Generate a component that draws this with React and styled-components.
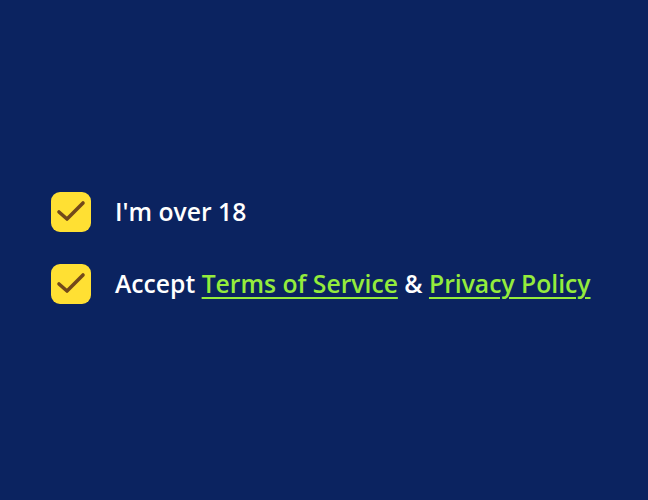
import React from "react";
import styled, { createGlobalStyle } from "styled-components";

const Global = createGlobalStyle`
  html, body { margin: 0; padding: 0; background: #0b2360; }
  body { font-family: "Open Sans", "Noto Sans", sans-serif; }
`;

const Page = styled.div`
  width: 648px;
  height: 500px;
  box-sizing: border-box;
  padding: 192px 0 0 51px;
  display: flex;
  align-items: flex-start;
  background: #0b2360;
`;

const List = styled.div`
  display: flex;
  flex-direction: column;
  gap: 32px;
`;

const Row = styled.label`
  display: flex;
  align-items: center;
  gap: 24px;
  color: #ffffff;
  font-size: 24.7px;
  font-weight: 600;
  line-height: 40px;
`;

const Box = styled.span`
  width: 40px;
  height: 40px;
  border-radius: 9px;
  background: #ffe033;
  display: flex;
  align-items: center;
  justify-content: center;
  flex-shrink: 0;
`;

const Link = styled.a`
  color: #94ec3c;
  text-decoration: underline;
  text-decoration-thickness: 2px;
  text-underline-offset: 4px;
`;

const Check = () => (
  <svg width="40" height="40" viewBox="0 0 40 40">
    <path
      d="M8 20 L16 27 L32 11"
      fill="none"
      stroke="#73491a"
      strokeWidth="3.6"
      strokeLinecap="round"
      strokeLinejoin="round"
    />
  </svg>
);

export default function App() {
  return (
    <>
      <Global />
      <Page>
        <List>
          <Row>
            <Box><Check /></Box>
            <span>I'm over 18</span>
          </Row>
          <Row>
            <Box><Check /></Box>
            <span>
              Accept <Link href="#">Terms of Service</Link> &amp;{" "}
              <Link href="#">Privacy Policy</Link>
            </span>
          </Row>
        </List>
      </Page>
    </>
  );
}
